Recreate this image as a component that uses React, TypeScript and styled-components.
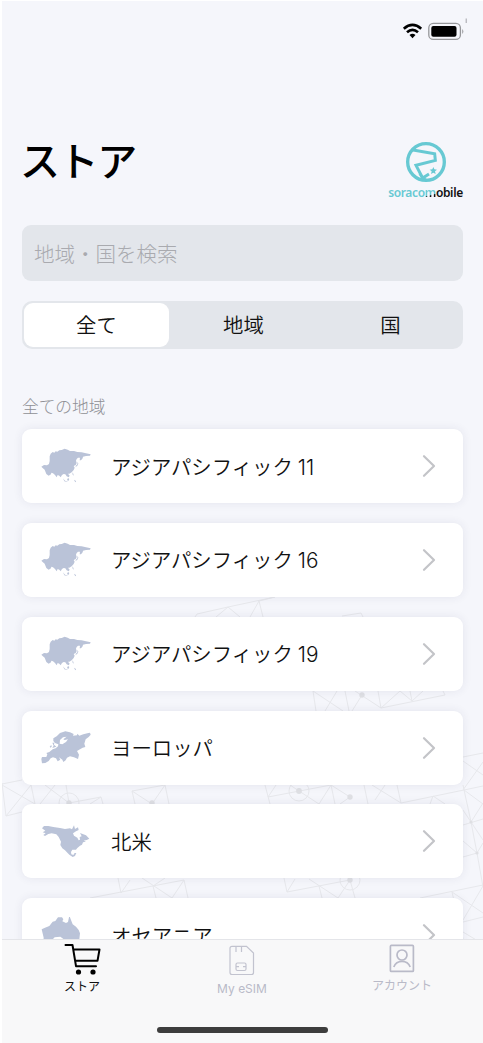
import React from "react";
import styled, { createGlobalStyle } from "styled-components";

const GlobalStyle = createGlobalStyle`
  * { box-sizing: border-box; }
  body {
    margin: 0;
    background: #fff;
    font-family: Inter, "Noto Sans CJK JP", sans-serif;
    color: #111;
  }
`;

const Screen = styled.div`
  position: relative;
  display: flex;
  flex-direction: column;
  width: 483px;
  height: 1043px;
  overflow: hidden;
  border-left: 2px solid #fff;
  border-top: 1px solid #fff;
  background: #f5f6fb;
`;

const Backdrop = styled.svg`
  position: absolute;
  left: -2px;
  top: -1px;
`;

const Content = styled.main`
  position: relative;
  flex: none;
  height: 938px;
  padding: 0 20px;
  overflow: hidden;
`;

const StatusBar = styled.div`
  display: flex;
  justify-content: flex-end;
  height: 138px;
  padding-top: 16px;
  margin-right: -5px;
`;

const Header = styled.header`
  display: flex;
  justify-content: space-between;
  height: 86px;
`;

const Title = styled.h1`
  margin: 0 0 0 -2px;
  color: #000;
  font-size: 40px;
  font-weight: 500;
  line-height: 46px;
  letter-spacing: -1.4px;
`;

const Brand = styled.div`
  display: flex;
  flex-direction: column;
  align-items: center;
  width: 75px;
  padding-top: 2px;
`;

const BrandName = styled.div`
  color: #111;
  font: 600 12px/16px "Noto Sans", sans-serif;
  letter-spacing: -0.36px;
  white-space: nowrap;
  margin-top: 2px;
`;

const BrandAccent = styled.span`
  color: #67c9d3;
`;

const BrandBlend = styled.span`
  background: linear-gradient(165deg, #67c9d3 62%, #111 66%);
  background-clip: text;
  -webkit-background-clip: text;
  color: transparent;
`;

const SearchField = styled.input`
  display: block;
  width: 441px;
  height: 56px;
  padding: 0 12px 1px;
  border: 0;
  border-radius: 9px;
  outline: 0;
  background: #e3e6eb;
  font: 300 20.5px "Noto Sans CJK JP", sans-serif;
  &::placeholder { color: #a9aaaf; opacity: 1; }
`;

const Segments = styled.div`
  display: grid;
  grid-template-columns: repeat(3, 145px);
  gap: 2px;
  width: 441px;
  height: 48px;
  margin-top: 20px;
  padding: 2px 0 2px 2px;
  border-radius: 10px;
  background: #e3e6eb;
`;

const Segment = styled.button<{ $active?: boolean }>`
  padding: 0 0 2px;
  border: 0;
  border-radius: 9px;
  background: ${(p) => (p.$active ? "#fff" : "transparent")};
  color: #111;
  font: 350 20.4px "Noto Sans CJK JP", sans-serif;
`;

const SectionTitle = styled.h2`
  height: 24px;
  margin: 45.5px 0 10.6px;
  color: #8f9095;
  font-size: 16.7px;
  font-weight: 300;
  line-height: 25px;
`;

const List = styled.div`
  display: flex;
  flex-direction: column;
  gap: 19.85px;
`;

const Card = styled.div`
  display: flex;
  flex: none;
  align-items: center;
  width: 441px;
  height: 74px;
  padding: 0 27px 0 19px;
  border-radius: 9px;
  background: #fff;
  box-shadow: 0 0 10px rgba(45, 45, 90, 0.085);
`;

const RegionMap = styled.svg`
  width: 50px;
  height: 36px;
  margin-right: 20px;
  fill: #bac3d8;
`;

const RegionName = styled.span`
  flex: 1;
  padding-top: 3px;
  font-size: 20.4px;
  font-weight: 350;
  line-height: 30px;
  white-space: nowrap;
`;

const PlanCount = styled.span`
  margin-left: -1px;
  font-size: 20.8px;
`;

const TabBar = styled.nav`
  position: relative;
  display: grid;
  grid-template-columns: repeat(3, 160px);
  flex: 1;
  border-top: 1px solid #e4e5e9;
  background: #f8f8f9;
`;

const Tab = styled.div<{ $active?: boolean; $drop?: number }>`
  display: flex;
  flex-direction: column;
  align-items: center;
  gap: 3px;
  color: ${(p) => (p.$active ? "#111" : "#b9bac8")};
  font-size: 12px;
  font-weight: 400;
  line-height: 18px;
  padding-top: ${(p) => p.$drop ?? 0}px;
`;

const HomeIndicator = styled.div`
  position: absolute;
  left: 155px;
  bottom: 10px;
  width: 171px;
  height: 6px;
  border-radius: 3px;
  background: #3d3d3d;
`;

const StatusIcons = () => (
  <svg width="66" height="26" viewBox="402 17 66 26" fill="none">
    <g stroke="#000" strokeWidth="2.7">
      <path d="M403.8 28.7Q412.5 21.2 421.2 28.7" />
      <path d="M407 32.3Q412.5 27.6 418 32.3" />
    </g>
    <path d="M409.5 35Q412.5 32.4 415.5 35L412.5 38.2Z" fill="#000" />
    <rect x="428.8" y="23.4" width="31.6" height="16" rx="4.5" stroke="#96979a" strokeWidth="1.3" />
    <rect x="431.3" y="26" width="25.2" height="10.8" rx="2" fill="#000" />
    <path d="M462.3 29Q464.4 31.3 462.3 34Z" fill="#8e8f92" />
    <path d="M466.2 18.5v4.5" stroke="#a2a3a8" />
  </svg>
);

const BrandMark = () => (
  <svg width="42" height="42" viewBox="92 34 126 126" fill="none" stroke="#67c9d3">
    <circle cx="155" cy="97" r="55" strokeWidth="10" />
    <path d="M112 60L181 72L183 92L125 107L145 145L164 133" strokeWidth="9" />
    <path d="M132 132L144 151L158 148Z" fill="#67c9d3" stroke="none" />
    <path d="M177 112l3 7 8 1-6 5 2 8-7-4-7 4 2-8-6-5 8-1Z" fill="#67c9d3" stroke="none" />
  </svg>
);

const Chevron = () => (
  <svg width="14" height="24" viewBox="0 0 14 24" fill="none">
    <path d="M2 2.2L12 12L2 21.8" stroke="#c3c4c8" strokeWidth="2.2" strokeLinecap="round" strokeLinejoin="round" />
  </svg>
);

type MapKind = "asia" | "europe" | "america" | "oceania";

const maps: Record<MapKind, { box: string; shape: React.ReactNode }> = {
  asia: {
    box: "123 85 150 108",
    shape: (
      <>
        <path d="M124 141L132 136 141 137 147 133 149 124 149 110 152 102 158 97 163 99 167 95 172 96 178 92 185 91 194 87 203 90 210 94 222 94 232 97 245 98 258 101 272 104 270 108 258 109 249 111 248 116 243 122 239 122 240 114 234 114 230 118 228 123 230 130 227 136 221 139 224 144 221 151 215 158 208 162 204 162 209 168 206 173 200 170 196 164 191 163 186 166 182 173 178 168 173 166 170 173 165 166 159 161 154 159 153 164 146 168 139 163 134 150 128 145Z" />
        <path d="M233 126l2 6-3 6-5 4 0-3 5-5zM217 158l3 4 1 6-3-3zM189 176l6 7 8 3-1 1-9-2zM204 175l4 3-3 6-4-3zM222 180l6 4v4l-4-3z" />
      </>
    ),
  },
  europe: {
    box: "123 391 150 108",
    shape: (
      <path d="M124 478L126 472 139 472 142 464 139 460 148 457 158 449 167 446 174 440 175 434 165 430 160 424 160 416 170 410 180 400 196 395 210 398 221 403 219 408 231 407 232 402 238 408 250 404 262 401 270 399 272 405 266 412 257 419 253 432 256 442 248 444 240 449 231 454 237 465 234 478 222 473 210 470 201 474 197 482 190 487 187 480 177 473 181 480 173 485 168 476 159 473 152 476 146 484 136 490 126 491ZM189 413L180 421 179 432 187 434 198 427 204 419 194 421 190 419 200 411ZM157 429L163 429 162 435 169 441 157 445 161 438ZM153 437l3 2-4 5-3-3Z" fillRule="evenodd" />
    ),
  },
  america: {
    box: "123 132 150 108",
    shape: (
      <path d="M126 148L132 141 145 141 160 144 180 147 195 150 210 148 216 151 222 139 225 150 234 145 236 153 228 157 219 163 222 170 232 176 236 184 240 182 239 174 245 172 240 162 250 166 258 169 268 179 260 183 251 185 258 188 249 190 246 197 240 200 232 207 228 212 217 212 213 219 214 226 220 228 224 222 229 222 225 231 218 234 208 227 195 214 187 208 181 198 183 188 176 174 169 166 155 163 145 165 135 171 130 168 137 163 128 160 136 155Z" />
    ),
  },
  oceania: {
    box: "123 83 150 108",
    shape: (
      <path d="M125 120L135 115 148 110 158 97 166 95 174 84 186 84 190 90 187 96 198 101 204 98 208 79 213 92 218 105 228 112 236 122 240 132 238 150 230 170 213 176 202 166 193 151 181 142 164 144 150 158 130 157 131 145Z" />
    ),
  },
};

const CartIcon = () => (
  <svg width="37" height="32" viewBox="0 0 37 32" fill="none" stroke="#000" strokeWidth="2" strokeLinejoin="round" strokeLinecap="round">
    <path d="M1.5 2H8.5L12 23.2H32M9.3 6.5H35.5L33.5 17.8H11.2" />
    <circle cx="14.5" cy="29" r="2.6" fill="#000" stroke="none" />
    <circle cx="29" cy="29" r="2.6" fill="#000" stroke="none" />
  </svg>
);

const SimIcon = () => (
  <svg width="26" height="32" viewBox="0 0 26 32" fill="none" stroke="#c2c3cf" strokeWidth="1.2">
    <path d="M3 1.3H17.5L24.5 8V27.5Q24.5 29.5 22.5 29.5H3Q1 29.5 1 27.5V3.3Q1 1.3 3 1.3Z" />
    <path d="M7 1.5V7M12.5 1.5V7M8.5 18H15.5Q17 18 17 19.5V24Q17 25.5 15.5 25.5H8.5Q7 25.5 7 24V19.5Q7 18 8.5 18ZM7 21.7h3M14 21.7h3" />
  </svg>
);

const AccountIcon = () => (
  <svg width="26" height="30" viewBox="0 0 26 30" fill="none" stroke="#b9bac8" strokeWidth="1.7">
    <rect x="1.4" y="1.4" width="23" height="26" rx="1" />
    <circle cx="13" cy="11" r="5" />
    <path d="M4.8 23Q7 17.4 13 17.4T21.2 23" />
  </svg>
);

const Network = () => (
  <Backdrop width="483" height="1043" viewBox="0 0 483 1043" fill="none">
    <g stroke="#e7e8ec" strokeWidth="1">
      <path d="M195 617L197 614L228 607L275 597M216 617L228 607L240 617M250 617L259 601L263 617M259 601L275 597M342 616L361 613L363 617" />
      <path d="M316 711L313 691L343 711M337 691L325 711M345 691L349 711M355 691L381 708M362 695L352 711M378 691L381 708L400 691L412 701L423 691M381 708L445 695L443 691M410 691L412 701" />
      <path d="M265 785L270 804M276 785L268 797L331 785L335 804M299 791L319 804L331 785L350 797L340 804M290 785L299 791M364 785L368 804M372 785L401 803L397 785M385 785L375 800M401 803L464 790L483 786M430 804L433 796L445 804" />
      <path d="M463 757L483 753M463 761L483 775M463 790L483 762M464 790L483 804M463 785L471 822L477 853L483 887M463 810L471 822L483 803M463 825L483 819M471 822L483 840M463 841L477 853L483 843M463 857L477 853" />
      <path d="M284 878L287 892L295 879M287 892L350 880L355 898M309 879L338 898L350 880M319 886L322 898M420 898L483 885M452 892L483 913M463 939L452 892M463 920L483 886M463 922L483 917M463 932L483 944" />
      <path d="M2 784L22 780M2 785L35 804M2 783L6 816L31 785L35 804M6 816L22 812M40 804L55 785M45 785L69 803L101 797L103 804M66 785L69 803M90 804L101 797M135 804L132 791L165 785L169 804M132 791L152 804L165 785" />
      <path d="M118 878L121 893L130 880M90 898L184 880L188 898M142 878L172 898L184 880M153 886L165 878M153 886L156 898" />
      <circle cx="299" cy="791" r="10" />
      <circle cx="69" cy="803" r="10" />
      <circle cx="350" cy="880" r="10" />
    </g>
    <g fill="#dfe0e4">
      <circle cx="362" cy="695" r="2.7" />
      <circle cx="299" cy="791" r="2.9" />
      <circle cx="350" cy="797" r="2.7" />
      <circle cx="350" cy="880" r="2.7" />
      <circle cx="69" cy="803" r="2.7" />
      <circle cx="152" cy="803" r="2.7" />
      <circle cx="471" cy="822" r="1.6" />
      <circle cx="477" cy="853" r="1.6" />
    </g>
  </Backdrop>
);

const regions: { name: string; count?: number; map: MapKind }[] = [
  { name: "アジアパシフィック", count: 11, map: "asia" },
  { name: "アジアパシフィック", count: 16, map: "asia" },
  { name: "アジアパシフィック", count: 19, map: "asia" },
  { name: "ヨーロッパ", map: "europe" },
  { name: "北米", map: "america" },
  { name: "オセアニア", map: "oceania" },
];

export default function App() {
  return (
    <>
      <GlobalStyle />
      <Screen>
        <Network />
        <Content>
          <StatusBar><StatusIcons /></StatusBar>
          <Header>
            <Title>ストア</Title>
            <Brand>
              <BrandMark />
              <BrandName>
                <BrandAccent>soraco</BrandAccent><BrandBlend>m</BrandBlend>obile
              </BrandName>
            </Brand>
          </Header>
          <SearchField placeholder="地域・国を検索" />
          <Segments>
            <Segment $active>全て</Segment>
            <Segment>地域</Segment>
            <Segment>国</Segment>
          </Segments>
          <SectionTitle>全ての地域</SectionTitle>
          <List>
            {regions.map((region, index) => (
              <Card key={index}>
                <RegionMap viewBox={maps[region.map].box}>{maps[region.map].shape}</RegionMap>
                <RegionName>
                  {region.name}
                  {region.count && <PlanCount> {region.count}</PlanCount>}
                </RegionName>
                <Chevron />
              </Card>
            ))}
          </List>
        </Content>
        <TabBar>
          <Tab $active $drop={3}><CartIcon />ストア</Tab>
          <Tab $drop={5}><SimIcon />My eSIM</Tab>
          <Tab $drop={4}><AccountIcon />アカウント</Tab>
          <HomeIndicator />
        </TabBar>
      </Screen>
    </>
  );
}
